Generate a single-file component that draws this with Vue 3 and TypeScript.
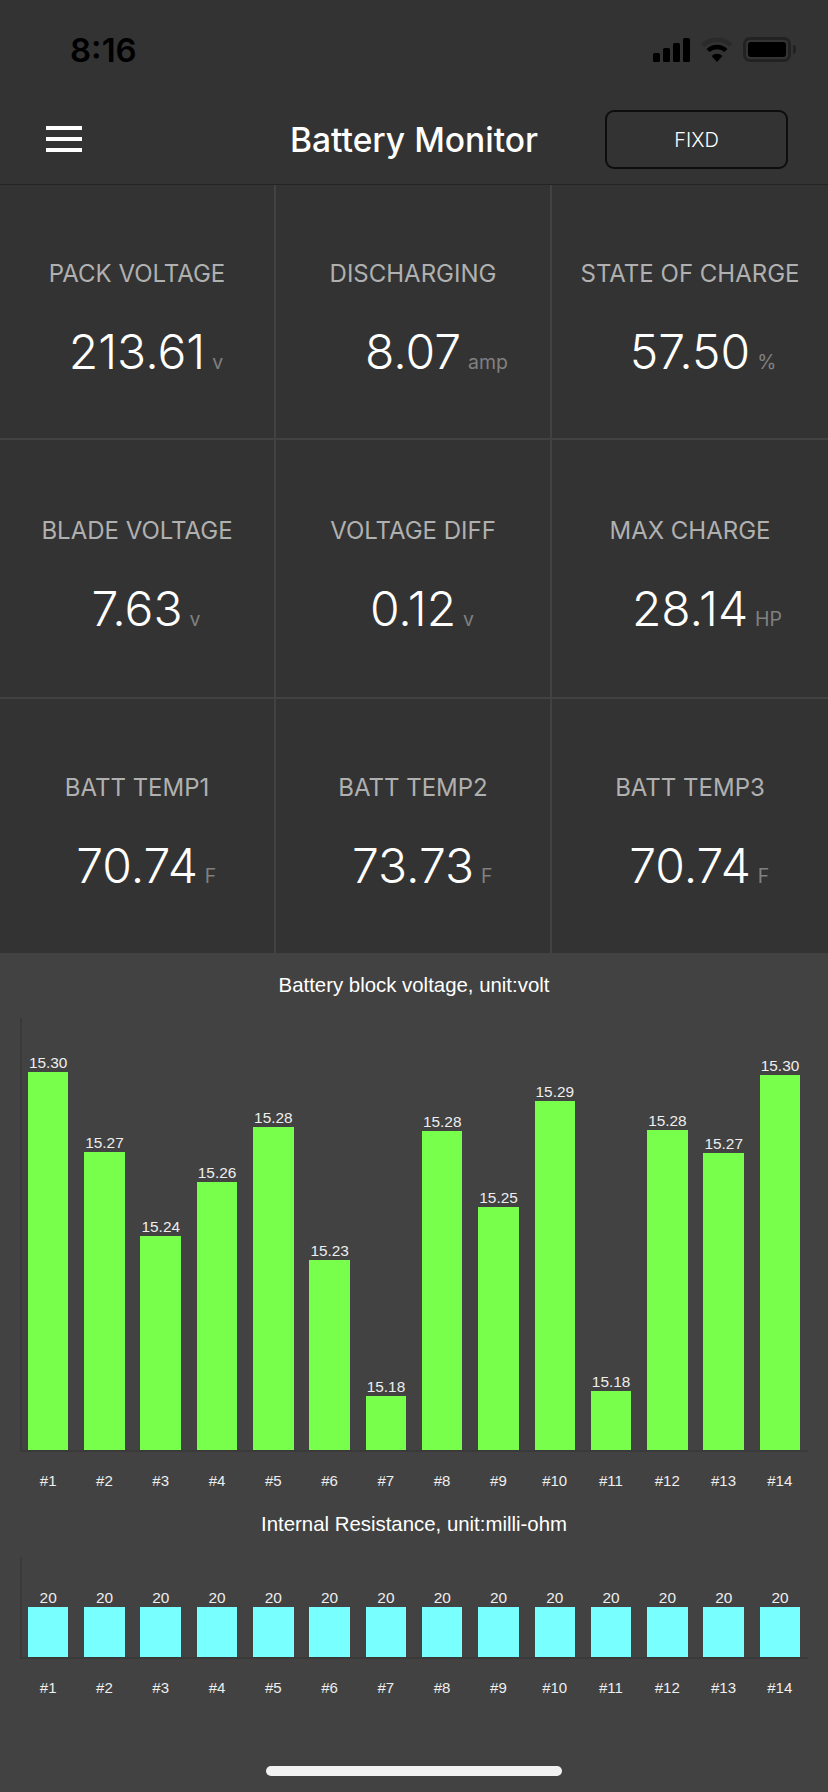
<script setup lang="ts">
const stats = [
  { label: "PACK VOLTAGE", value: "213.61", unit: "v" },
  { label: "DISCHARGING", value: "8.07", unit: "amp" },
  { label: "STATE OF CHARGE", value: "57.50", unit: "%" },
  { label: "BLADE VOLTAGE", value: "7.63", unit: "v" },
  { label: "VOLTAGE DIFF", value: "0.12", unit: "v" },
  { label: "MAX CHARGE", value: "28.14", unit: "HP" },
  { label: "BATT TEMP1", value: "70.74", unit: "F" },
  { label: "BATT TEMP2", value: "73.73", unit: "F" },
  { label: "BATT TEMP3", value: "70.74", unit: "F" },
];

// bar heights are in px, read off the chart baseline
const voltage = [
  { v: "15.30", h: 378 },
  { v: "15.27", h: 298 },
  { v: "15.24", h: 214 },
  { v: "15.26", h: 268 },
  { v: "15.28", h: 323 },
  { v: "15.23", h: 190 },
  { v: "15.18", h: 54 },
  { v: "15.28", h: 319 },
  { v: "15.25", h: 243 },
  { v: "15.29", h: 349 },
  { v: "15.18", h: 59 },
  { v: "15.28", h: 320 },
  { v: "15.27", h: 297 },
  { v: "15.30", h: 375 },
];

const resistance = voltage.map(() => ({ v: "20", h: 50 }));

const charts = [
  { title: "Battery block voltage, unit:volt", bars: voltage, color: "#78ff4c", height: 434 },
  { title: "Internal Resistance, unit:milli-ohm", bars: resistance, color: "#78ffff", height: 102 },
];
</script>

<template>
  <div class="screen">
    <div class="status">
      <span class="time">8:16</span>
      <div class="status-icons">
        <svg width="38" height="24" viewBox="0 0 38 24">
          <rect x="0" y="15" width="7" height="9" rx="1.5" />
          <rect x="10" y="10" width="7" height="14" rx="1.5" />
          <rect x="20" y="5" width="7" height="19" rx="1.5" />
          <rect x="30" y="0" width="7" height="24" rx="1.5" />
        </svg>
        <svg width="32" height="25" viewBox="0 0 32 25">
          <path d="M2 8.5 A20 20 0 0 1 30 8.5" fill="none" stroke="#2a2a2a" stroke-width="4.5" />
          <path d="M7 13.5 A13 13 0 0 1 25 13.5" fill="none" stroke="#000" stroke-width="4.5" />
          <path d="M16 25 L10.5 19 A8 8 0 0 1 21.5 19 Z" fill="#000" />
        </svg>
        <div class="battery">
          <div class="battery-fill"></div>
        </div>
        <div class="battery-nub"></div>
      </div>
    </div>

    <header class="nav">
      <div class="nav-side">
        <div class="burger"><i></i><i></i><i></i></div>
      </div>
      <h1 class="title">Battery Monitor</h1>
      <div class="nav-side nav-right">
        <button class="fixd">FIXD</button>
      </div>
    </header>

    <section class="stats">
      <div v-for="s in stats" :key="s.label" class="stat">
        <div class="stat-label">{{ s.label }}</div>
        <div class="stat-line">
          <span></span>
          <span class="stat-value">{{ s.value }}</span>
          <span class="stat-unit">{{ s.unit }}</span>
        </div>
      </div>
    </section>

    <section class="charts">
      <div v-for="c in charts" :key="c.title" class="chart">
        <div class="chart-title">{{ c.title }}</div>
        <div class="plot" :style="{ height: c.height + 'px' }">
          <div v-for="(b, i) in c.bars" :key="i" class="col">
            <span class="bar-value">{{ b.v }}</span>
            <div class="bar" :style="{ height: b.h + 'px', background: c.color }"></div>
          </div>
        </div>
        <div class="ticks">
          <span v-for="(b, i) in c.bars" :key="i" class="tick">#{{ i + 1 }}</span>
        </div>
      </div>
    </section>

    <div class="home-wrap"><div class="home"></div></div>
  </div>
</template>

<style>
html,
body {
  margin: 0;
  background: #424242;
}
</style>

<style scoped>
.screen {
  width: 828px;
  height: 1792px;
  display: flex;
  flex-direction: column;
  background: #424242;
  font-family: Inter, "Liberation Sans", sans-serif;
  overflow: hidden;
}

.status {
  height: 88px;
  flex: none;
  background: #333;
  display: flex;
  justify-content: space-between;
  align-items: flex-start;
  padding: 37px 32px 0 70px;
  box-sizing: border-box;
}
.time {
  font-size: 33px;
  line-height: 26px;
  font-weight: 600;
  color: #000;
}
.status-icons {
  display: flex;
  align-items: center;
  gap: 10px;
}
.status-icons svg {
  fill: #000;
  display: block;
}
.battery {
  width: 48px;
  height: 25px;
  box-sizing: border-box;
  border: 3px solid #222;
  border-radius: 7px;
  padding: 2px;
}
.battery-fill {
  height: 100%;
  background: #000;
  border-radius: 3px;
}
.battery-nub {
  width: 3px;
  height: 9px;
  background: #222;
  border-radius: 0 3px 3px 0;
  margin-left: -8px;
}

.nav {
  height: 97px;
  flex: none;
  background: #333;
  border-bottom: 1px solid #242424;
  box-sizing: border-box;
  display: flex;
  align-items: center;
  padding: 6px 40px 0;
}
.nav-side {
  flex: 1;
  display: flex;
}
.nav-right {
  justify-content: flex-end;
}
.burger {
  width: 36px;
  margin-left: 6px;
  display: flex;
  flex-direction: column;
  gap: 7px;
}
.burger i {
  display: block;
  height: 4px;
  background: #fff;
}
.title {
  margin: 0;
  font-size: 33.6px;
  font-weight: 500;
  color: #fff;
  white-space: nowrap;
}
.fixd {
  width: 183px;
  height: 59px;
  background: transparent;
  border: 2px solid #0d0d0d;
  border-radius: 9px;
  color: #fff;
  font-family: inherit;
  font-size: 20px;
  font-weight: 300;
  padding: 1px 0 0;
}

.stats {
  flex: none;
  height: 768px;
  background: #333;
  display: grid;
  grid-template-columns: repeat(3, 276px);
  grid-template-rows: 255px 259px 254px;
}
.stat {
  display: flex;
  flex-direction: column;
  align-items: stretch;
  justify-content: center;
  gap: 36px;
  border-right: 2px solid #424242;
  border-bottom: 2px solid #424242;
  box-sizing: border-box;
  padding-top: 16px;
}
.stat:nth-child(3n) {
  border-right: 0;
}
.stat:nth-child(n + 7) {
  border-bottom: 0;
}
.stat-label {
  text-align: center;
  font-size: 24px;
  line-height: 28px;
  color: #b0b0b0;
  white-space: nowrap;
}
.stat-line {
  display: grid;
  grid-template-columns: 1fr auto 1fr;
  align-items: baseline;
  column-gap: 7px;
  color: #fff;
}
.stat-value {
  font-size: 48px;
  line-height: 56px;
  font-weight: 300;
  color: #fff;
}
.stat-unit {
  font-size: 19.5px;
  color: #808080;
}

.charts {
  flex: 1;
  background: #424242;
  display: flex;
  flex-direction: column;
  font-family: "Liberation Sans", sans-serif;
}
.chart {
  display: flex;
  flex-direction: column;
}
.chart-title {
  text-align: center;
  color: #fff;
  font-size: 20.4px;
  line-height: 24px;
  padding-top: 20px;
}
.chart + .chart .chart-title {
  padding-top: 21px;
}
.chart + .chart .plot {
  margin-top: 21px;
}
.plot {
  display: flex;
  align-items: flex-end;
  margin: 21px 20px 0;
  border-left: 2px solid #3a3a3a;
  border-bottom: 2px solid #3a3a3a;
  box-sizing: border-box;
}
.col {
  width: 56.3px;
  flex: none;
  display: flex;
  flex-direction: column;
  align-items: center;
}
.col:first-child {
  margin-left: -2px;
}
.bar {
  width: 40.5px;
}
.bar-value {
  color: #eee;
  font-size: 15.4px;
  line-height: 18px;
}
.ticks {
  display: flex;
  margin: 0 20px;
  padding-top: 19px;
}
.tick {
  width: 56.3px;
  text-align: center;
  color: #eee;
  font-size: 15px;
  line-height: 20px;
}

.home-wrap {
  flex: 1;
  display: flex;
  align-items: flex-end;
  justify-content: center;
  background: #424242;
  padding-bottom: 16px;
}
.home {
  width: 296px;
  height: 10px;
  border-radius: 5px;
  background: #f2f2f2;
}
</style>
